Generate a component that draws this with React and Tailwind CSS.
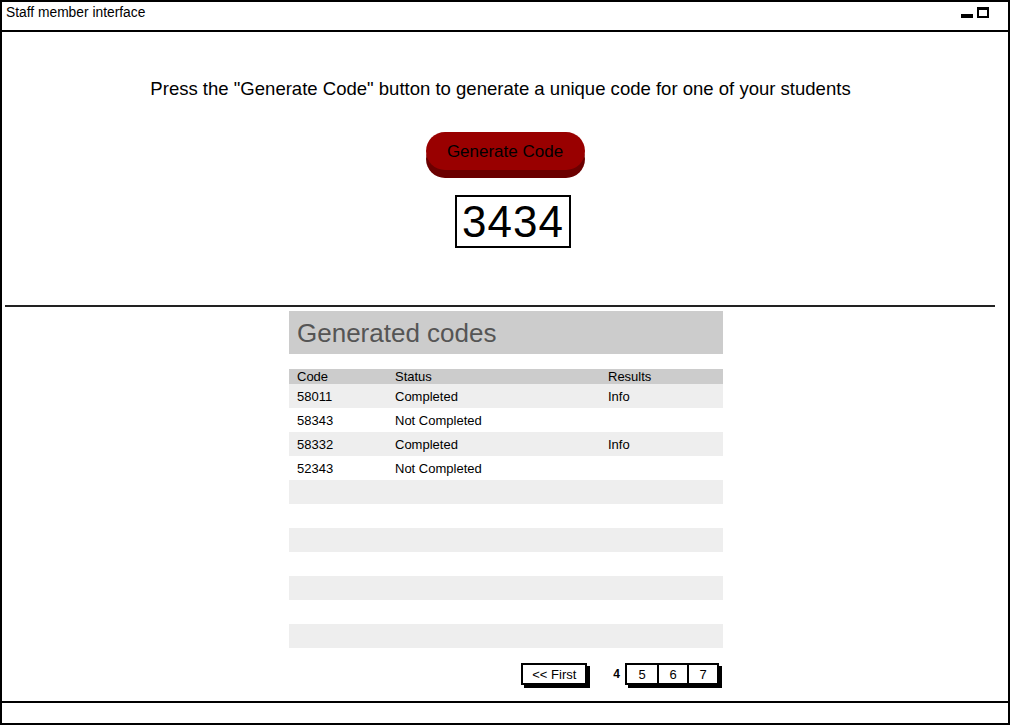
const rows = [
  { code: '58011', status: 'Completed', results: 'Info' },
  { code: '58343', status: 'Not Completed', results: '' },
  { code: '58332', status: 'Completed', results: 'Info' },
  { code: '52343', status: 'Not Completed', results: '' },
  null, null, null, null, null, null, null,
];

export default function App() {
  return (
    <div className="w-[1012px] h-[726px] bg-white font-['Liberation_Sans',Arial,sans-serif] text-black">
      <div className="w-[1010px] h-[725px] border-2 border-black flex flex-col">
        {/* Title bar */}
        <div className="h-[30px] border-b-2 border-black flex items-center justify-between pl-[4px] pr-[19px] shrink-0">
          <span className="text-[13.8px] leading-none -mt-[6px]">Staff member interface</span>
          <div className="flex items-end gap-[4px] -mt-[8px]">
            <div className="w-[12px] h-[4px] bg-black" />
            <div className="w-[12px] h-[11px] border-2 border-t-[3px] border-black" />
          </div>
        </div>

        {/* Content */}
        <div className="flex-1 flex flex-col">
          <div className="flex flex-col items-center pt-[47px]">
            <p className="text-[18.55px] leading-[20px] mr-[9px]">
              Press the "Generate Code" button to generate a unique code for one of your students
            </p>
            <button className="mt-[33px] w-[159px] h-[38px] rounded-full bg-[#990000] shadow-[0_8px_0_#6b0000] text-[17px] text-black flex items-center justify-center pt-[2px]">
              Generate Code
            </button>
            <div className="mt-[25px] ml-[16px] w-[116px] h-[53px] border-2 border-black flex items-center justify-center">
              <span className="text-[44px] leading-none tracking-[1px]">3434</span>
            </div>
          </div>

          <div className="mt-[57px] ml-[3px] w-[990px] h-[2px] bg-[#222]" />

          <div className="mt-[4px] ml-[287px] w-[434px] flex flex-col">
            <div className="h-[43px] bg-[#cccccc] flex items-center pl-[8px]">
              <span className="text-[26px] leading-none text-[#555555]">Generated codes</span>
            </div>

            <div className="mt-[15px] flex flex-col text-[13px]">
              <div className="h-[15px] bg-[#cccccc] grid grid-cols-[98px_213px_1fr] pl-[8px] items-center leading-none">
                <span>Code</span>
                <span>Status</span>
                <span>Results</span>
              </div>
              {rows.map((r, i) => (
                <div
                  key={i}
                  className={`h-[24px] grid grid-cols-[98px_213px_1fr] pl-[8px] items-center leading-none ${
                    i % 2 === 0 ? 'bg-[#eeeeee]' : 'bg-white'
                  }`}
                >
                  <span>{r ? r.code : ''}</span>
                  <span>{r ? r.status : ''}</span>
                  <span>{r ? r.results : ''}</span>
                </div>
              ))}
            </div>

            {/* Pagination */}
            <div className="mt-[15px] flex items-center justify-end pr-[4px] text-[13px]">
              <div className="w-[66px] h-[22px] border-2 border-black shadow-[3px_3px_0_#000] flex items-center justify-center leading-none">
                &lt;&lt; First
              </div>
              <span className="ml-[26px] mr-[5px] font-bold text-[12px]">4</span>
              <div className="flex border-2 border-black shadow-[3px_3px_0_#000] h-[22px]">
                {['5', '6', '7'].map((p, i) => (
                  <div
                    key={p}
                    className={`w-[30px] flex items-center justify-center leading-none ${i > 0 ? 'border-l-2 border-black' : ''}`}
                  >
                    {p}
                  </div>
                ))}
              </div>
            </div>
          </div>
        </div>

        {/* Status bar */}
        <div className="h-[22px] border-t-2 border-black shrink-0" />
      </div>
    </div>
  );
}
